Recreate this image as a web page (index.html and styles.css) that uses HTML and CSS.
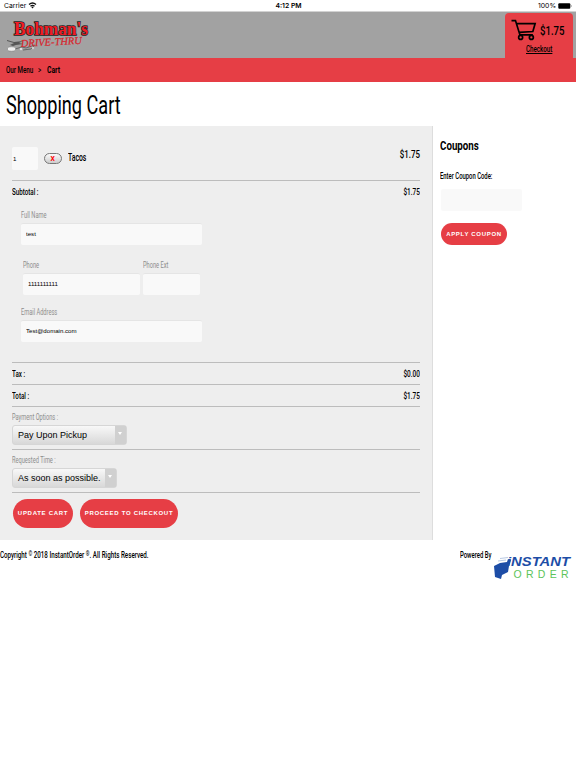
FILE: index.html
```html
<!DOCTYPE html>
<html lang="en">
<head>
  <meta charset="UTF-8" />
  <meta name="viewport" content="width=device-width, initial-scale=1.0"/>
  <title>Shopping Cart</title>
  <link rel="stylesheet" href="styles.css">
</head>
<body>

  <div class="status-bar">
    <div class="carrier">Carrier
      <svg width="9" height="7" viewBox="0 0 18 14">
        <path d="M2 5Q9-1 16 5M5 8.500Q9 5 13 8.500" fill="none" stroke="#111" stroke-width="2.500"/>
        <path d="M6.500 10Q9 8 11.500 10L9 13Z" fill="#111"/>
      </svg>
    </div>
    <div class="clock">4:12 PM</div>
    <div class="battery">100%
      <svg width="14" height="6" viewBox="0 0 14 6">
        <rect x="0.300" y="0.300" width="12" height="5.400" rx="1" fill="#000"/>
        <path d="M12.800 2v2q1-.3 1-1t-1-1" fill="#777"/>
      </svg>
    </div>
  </div>

  <header class="header">
    <svg class="logo" width="84" height="40" viewBox="0 -4 84 40">
      <path d="M0 22l7 2 9-1-4 2 4 1-7 1-3 1-3-1 4-2-7-2Z" fill="#555"/>
      <path d="M8 31l7-2 4 1 9-3-4 4-8 1" fill="none" stroke="#666" stroke-width="1"/>
      <ellipse cx="4.500" cy="31" rx="4.200" ry="2.200" fill="#eee" stroke="#777" stroke-width=".5"/>
      <circle cx="14" cy="31" r="1.300" fill="#ddd"/>
      <circle cx="26" cy="30" r="1.200" fill="#ccc"/>
      <g class="logo-name">
        <text x="7" y="17" textLength="74" lengthAdjust="spacingAndGlyphs">Bohman's</text>
      </g>
      <g class="logo-sub" transform="rotate(-3 14 28)">
        <text x="14" y="29" textLength="61" lengthAdjust="spacingAndGlyphs">DRIVE-THRU</text>
      </g>
    </svg>
    <div class="cart-box">
      <div class="cart-total">
        <svg width="26" height="22" viewBox="0 0 26 22" fill="none" stroke="#000" stroke-width="1.700">
          <path d="M0.500 1.500H4.500L9 16H22M5.500 4.500H24.300L22 12.500L8 13.300"/>
          <circle cx="9.700" cy="18.500" r="2"/>
          <circle cx="20.500" cy="18.500" r="2"/>
        </svg>
        <span class="narrow price">$1.75</span>
      </div>
      <a class="narrow checkout">Checkout</a>
    </div>
  </header>

  <nav class="breadcrumb">
    <span class="narrow crumb">Our Menu</span>
    <span class="narrow arrow">&gt;</span>
    <span class="narrow current">Cart</span>
  </nav>

  <h1><span class="narrow">Shopping Cart</span></h1>

  <div class="content">
    <main class="cart">
      <div class="row item">
        <input class="qty" type="text" value="1" />
        <button class="remove"><span class="narrow">X</span></button>
        <span class="narrow item-name">Tacos</span>
        <span class="narrow item-price">$1.75</span>
      </div>

      <div class="row subtotal">
        <div class="line">
          <span class="narrow label">Subtotal :</span>
          <span class="narrow amount">$1.75</span>
        </div>
        <div class="field name">
          <label class="narrow">Full Name</label>
          <input type="text" value="test" />
        </div>
        <div class="phones">
          <div class="field phone">
            <label class="narrow">Phone</label>
            <input type="text" value="1111111111" />
          </div>
          <div class="field ext">
            <label class="narrow">Phone Ext</label>
            <input type="text" />
          </div>
        </div>
        <div class="field email">
          <label class="narrow">Email Address</label>
          <input type="text" value="Test@domain.com" />
        </div>
      </div>

      <div class="row line tax">
        <span class="narrow label">Tax :</span>
        <span class="narrow amount">$0.00</span>
      </div>
      <div class="row line tax">
        <span class="narrow label">Total :</span>
        <span class="narrow amount">$1.75</span>
      </div>

      <div class="row option">
        <label class="narrow">Payment Options :</label>
        <div class="select payment">
          <span>Pay Upon Pickup</span>
          <i class="drop"></i>
        </div>
      </div>
      <div class="row option">
        <label class="narrow">Requested Time :</label>
        <div class="select time">
          <span>As soon as possible.</span>
          <i class="drop"></i>
        </div>
      </div>

      <div class="actions">
        <button class="btn update">UPDATE CART</button>
        <button class="btn proceed">PROCEED TO CHECKOUT</button>
      </div>
    </main>

    <aside class="coupons">
      <h2><span class="narrow">Coupons</span></h2>
      <label class="narrow">Enter Coupon Code:</label>
      <input type="text" />
      <button class="btn apply">APPLY COUPON</button>
    </aside>
  </div>

  <footer class="footer">
    <span class="narrow copyright">Copyright <sup>©</sup> 2018 InstantOrder <sup>®</sup>. All Rights Reserved.</span>
    <span class="narrow powered">Powered By</span>
    <svg class="instant" width="80" height="30" viewBox="0 0 80 30">
      <path d="M0 13L6 10 13 9 14 6 17 7 15 13 14 19 8 22 7 26 1 24Z" fill="#1d4da6"/>
      <path d="M4 8l8-1M6 5.500l8-1" stroke="#b8c9e4" stroke-width="1"/>
      <text class="instant-name" x="13" y="12.500" textLength="63" lengthAdjust="spacingAndGlyphs">iNSTANT</text>
      <text class="order-name" x="19.500" y="25" textLength="55">ORDER</text>
    </svg>
  </footer>

</body>
</html>
```
FILE: styles.css
```css
* {
  box-sizing: border-box;
}

body {
  margin: 0;
  background-color: white;
  color: #000;
  font-family: Roboto, Arial, sans-serif;
  font-size: 9px;
}

input,
button {
  border: none;
  margin: 0;
  padding: 0;
  font-family: "Liberation Sans", Arial, sans-serif;
}

/* Condensed lettering */
.narrow {
  display: inline-block;
  transform: scaleX(0.69);
  transform-origin: left center;
  font-weight: 500;
  white-space: nowrap;
}

.status-bar {
  display: grid;
  grid-template-columns: 1fr 1fr 1fr;
  height: 12px;
  padding: 0 4px;
  border-bottom: 1px solid #d2d2d2;
  font-family: Inter, sans-serif;
  font-size: 6.8px;
  line-height: 12px;
}

.carrier svg {
  vertical-align: -1px;
}

.clock {
  padding-left: 1px;
  text-align: center;
  font-weight: 600;
}

.battery {
  text-align: right;
}

.battery svg {
  vertical-align: -1px;
}

.header {
  display: flex;
  justify-content: space-between;
  height: 46px;
  padding: 1px 3px 0 7px;
  background-color: #a2a2a2;
}

.logo {
  margin-top: 1px;
}

.logo-name {
  font: bold 18.5px "Liberation Serif", serif;
  fill: #f21c24;
  stroke: #222;
  stroke-width: 1.6px;
  paint-order: stroke;
}

.logo-sub {
  font: italic 10.5px "Liberation Serif", serif;
  fill: #d8232a;
  stroke: #d8232a;
  stroke-width: 0.2px;
}

.cart-box {
  width: 68px;
  height: 45px;
  padding: 6px 0 0 6px;
  border-radius: 4px 4px 0 0;
  background-color: #e63e45;
}

.cart-total {
  display: flex;
  gap: 3px;
  height: 24px;
}

.price {
  font-size: 13px;
  line-height: 23px;
  transform: scaleX(0.74);
}

.checkout {
  margin-left: 15px;
  line-height: 12px;
  text-decoration: underline;
}

.breadcrumb {
  display: flex;
  height: 24px;
  padding-left: 6px;
  background-color: #e63e45;
  line-height: 25px;
}

.crumb {
  width: 32px;
}

.arrow {
  width: 9px;
}

.breadcrumb .current {
  font-weight: bold;
  transform: scaleX(0.75);
}

h1 {
  height: 44px;
  margin: 0;
  padding-left: 6px;
  font-size: 25px;
  line-height: 47px;
}

h1 .narrow {
  font-weight: normal;
  transform: scaleX(0.725);
}

.content {
  display: flex;
  height: 414px;
}

.cart {
  width: 433px;
  padding: 0 12px;
  border-right: 1px solid #ddd;
  background-color: #eee;
}

.row {
  border-bottom: 1px solid #bcbcbc;
}

.item {
  display: flex;
  height: 55px;
  padding-top: 21px;
}

.item input,
.field input,
.coupons input {
  border-radius: 2px;
  background-color: #f9f9f9;
  color: #000;
  font-size: 6.1px;
}

.item .qty {
  width: 26px;
  height: 23px;
  padding-left: 1px;
}

.remove {
  width: 18px;
  height: 11px;
  margin: 6px 6px 0 6px;
  border: 1px solid #777;
  border-radius: 6px;
  background: linear-gradient(#fafafa, #ccc);
  color: #f00;
  font: bold 8px/9px Roboto, sans-serif;
}

.remove .narrow {
  font-weight: bold;
  transform: scaleX(0.85);
  transform-origin: center;
}

.item-name {
  font-size: 10.5px;
  line-height: 21px;
  transform: scaleX(0.65);
}

.item-price {
  margin-left: auto;
  font-size: 11px;
  line-height: 15px;
  transform: scaleX(0.72);
  transform-origin: right center;
}

.subtotal {
  height: 182px;
}

.line {
  display: flex;
  justify-content: space-between;
  line-height: 22px;
}

.amount {
  transform: scaleX(0.72);
  transform-origin: right center;
}

.tax {
  height: 22px;
}

.field label,
.option label {
  color: #8c8c8c;
  font-weight: normal;
  transform: scaleX(0.63);
}

.field label {
  display: block;
  height: 14px;
  line-height: 12px;
}

.field input {
  display: block;
  height: 22px;
  padding: 0 0 2px 5px;
  border-top: 1px solid #e5e5e5;
}

.name,
.email {
  width: 182px;
  margin-left: 9px;
}

.name {
  margin-top: 6px;
}

.name input,
.email input {
  width: 181px;
}

.phones {
  display: flex;
  gap: 3px;
  margin: 14px 0 11px 11px;
}

.phone {
  width: 117px;
}

.phone input {
  width: 117px;
}

.ext input {
  width: 57px;
}

.option {
  height: 43px;
  padding-top: 4px;
}

.option label {
  display: block;
  height: 14px;
  line-height: 13px;
}

.select {
  display: flex;
  justify-content: space-between;
  height: 20px;
  padding-left: 5px;
  border: 1px solid #d6d6d6;
  border-radius: 3px;
  background: linear-gradient(#f8f8f8, #d8d8d8);
  color: #000;
  font-family: "Liberation Sans", Arial, sans-serif;
  font-size: 9px;
  line-height: 19px;
}

.payment {
  width: 115px;
}

.time {
  width: 105px;
}

.drop {
  width: 11px;
  padding: 6px 0 0 3px;
  background-color: #d0d0d0;
}

.drop::before {
  content: "";
  display: block;
  width: 0;
  border: 2px solid transparent;
  border-top: 3px solid #fff;
}

.actions {
  display: flex;
  gap: 7px;
  padding: 6px 0 0 1px;
}

.btn {
  padding-bottom: 1px;
  border-radius: 15px;
  background-color: #e63e45;
  color: white;
  font-size: 6px;
  font-weight: bold;
  letter-spacing: 0.7px;
  white-space: nowrap;
}

.update {
  width: 60px;
  height: 29px;
}

.proceed {
  width: 98px;
  height: 29px;
}

.coupons {
  padding: 11px 0 0 7px;
}

.coupons h2 {
  height: 33px;
  margin: 0;
  font-size: 13px;
  line-height: 17px;
}

.coupons h2 .narrow {
  font-weight: bold;
  transform: scaleX(0.75);
}

.coupons label {
  display: block;
  width: 80px;
  height: 19px;
  line-height: 13px;
  transform: scaleX(0.655);
}

.coupons input {
  display: block;
  width: 81px;
  height: 22px;
  margin-left: 1px;
}

.apply {
  display: block;
  width: 66px;
  height: 22px;
  margin: 12px 0 0 1px;
  padding: 0;
}

.footer {
  display: flex;
  padding-top: 9px;
}

.copyright,
.powered {
  height: 12px;
  line-height: 12px;
}

.copyright {
  width: 460px;
}

.copyright sup {
  font-size: 7px;
  line-height: 0;
  vertical-align: 2px;
}

.powered {
  width: 34px;
  transform: scaleX(0.66);
}

.instant {
  margin-top: 4px;
}

.instant-name {
  font: italic bold 13px "Liberation Sans", sans-serif;
  fill: #1d4da6;
}

.order-name {
  font: 10.5px "Liberation Sans", sans-serif;
  fill: #5cc45a;
}
```
